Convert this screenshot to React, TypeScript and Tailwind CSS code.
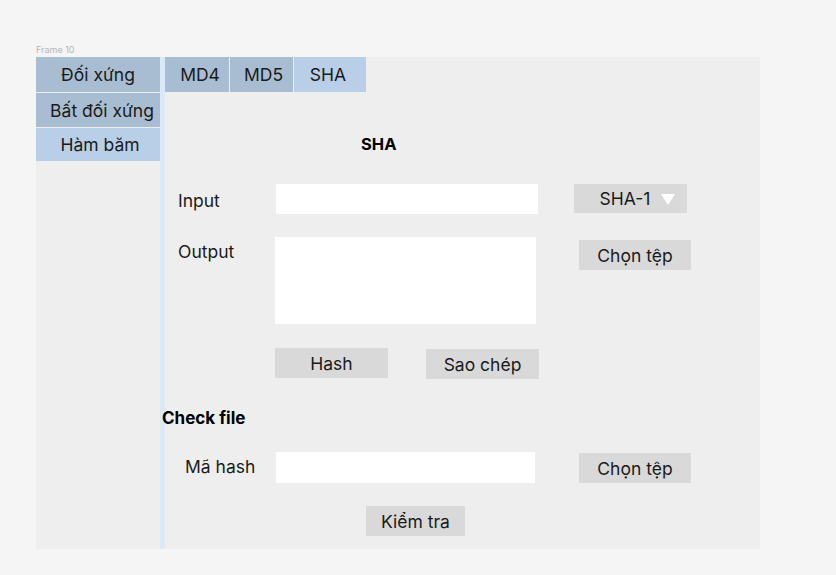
import React from 'react';

const font = { fontFamily: 'Inter, "Noto Sans", sans-serif' };

const SideButton = ({ label, active, h, pad }: { label: string; active?: boolean; h: string; pad: string }) => (
  <div
    className={`${h} ${pad} flex items-center justify-center pt-[2px] text-[17.5px] text-[#1a1a1a] ${
      active ? 'bg-[#b8cfe7]' : 'bg-[#a8bdd1]'
    }`}
  >
    {label}
  </div>
);

const GrayButton = ({ label, className }: { label: string; className: string }) => (
  <div
    className={`bg-[#d9d9d9] flex items-center justify-center pt-[3px] text-[17.5px] text-[#1a1a1a] ${className}`}
  >
    {label}
  </div>
);

const App = () => {
  return (
    <div className="w-[836px] h-[575px] bg-[#f5f5f5] pt-[44px]" style={font}>
      <div className="ml-[36px] text-[9px] leading-[12px] text-[#b5b5b5]">Frame 10</div>
      <div className="ml-[36px] mt-[1px] w-[724px] h-[492px] bg-[#eeeeee] flex">
        {/* sidebar */}
        <div className="w-[124px] flex flex-col gap-[1px]">
          <SideButton label="Đối xứng" h="h-[35px]" pad="" />
          <SideButton label="Bất đối xứng" h="h-[34px]" pad="pl-[8px]" />
          <SideButton label="Hàm băm" h="h-[33px]" pad="pl-[4px]" active />
        </div>
        <div className="w-[5px] bg-[#dbe8f5]" />

        {/* main */}
        <div className="flex-1 flex flex-col">
          <div className="flex gap-[1px] h-[35px] text-[17.5px] text-[#1a1a1a]">
            <div className="w-[64px] bg-[#a8bdd1] flex items-center justify-center pt-[2px] pl-[6px]">MD4</div>
            <div className="w-[63px] bg-[#a8bdd1] flex items-center justify-center pt-[2px] pl-[4px]">MD5</div>
            <div className="w-[72px] bg-[#b8cfe7] flex items-center justify-center pt-[2px] pr-[4px]">SHA</div>
          </div>

          <div className="mt-[42px] ml-[196px] text-[16.5px] leading-[20px] font-bold text-black">SHA</div>

          {/* input row */}
          <div className="mt-[30px] flex items-start">
            <div className="w-[111px] pl-[13px] pt-[4px] h-[30px] flex items-center text-[17.5px] text-[#1a1a1a]">
              Input
            </div>
            <div className="w-[262px] h-[30px] bg-white" />
            <div className="ml-[36px] w-[113px] h-[29px] bg-[#d9d9d9] flex items-center justify-center gap-[11px] pt-[2px] text-[17.5px] text-[#1a1a1a]">
              <span className="ml-[14px]">SHA-1</span>
              <svg width="14" height="12" viewBox="0 0 14 12">
                <polygon points="0,0 14,0 7,11" fill="#ffffff" />
              </svg>
            </div>
          </div>

          {/* output row */}
          <div className="mt-[23px] flex items-start">
            <div className="w-[110px] pl-[13px] pt-[4px] text-[17.5px] leading-[22px] text-[#1a1a1a]">Output</div>
            <div className="w-[261px] h-[87px] bg-white" />
            <GrayButton label="Chọn tệp" className="ml-[43px] mt-[3px] w-[112px] h-[30px]" />
          </div>

          {/* action buttons */}
          <div className="mt-[24px] flex items-start">
            <GrayButton label="Hash" className="ml-[110px] w-[113px] h-[30px]" />
            <GrayButton label="Sao chép" className="ml-[38px] mt-[1px] w-[113px] h-[30px]" />
          </div>

          <div className="mt-[29px] -ml-[3px] text-[17px] leading-[20px] font-bold text-black">Check file</div>

          {/* hash check row */}
          <div className="mt-[24px] flex items-start">
            <div className="w-[111px] pl-[20px] h-[31px] flex items-center text-[17.5px] text-[#1a1a1a]">Mã hash</div>
            <div className="w-[259px] h-[31px] bg-white" />
            <GrayButton label="Chọn tệp" className="ml-[44px] mt-[1px] w-[112px] h-[30px]" />
          </div>

          <GrayButton label="Kiểm tra" className="mt-[23px] ml-[201px] w-[99px] h-[30px]" />
        </div>
      </div>
    </div>
  );
};

export default App;
